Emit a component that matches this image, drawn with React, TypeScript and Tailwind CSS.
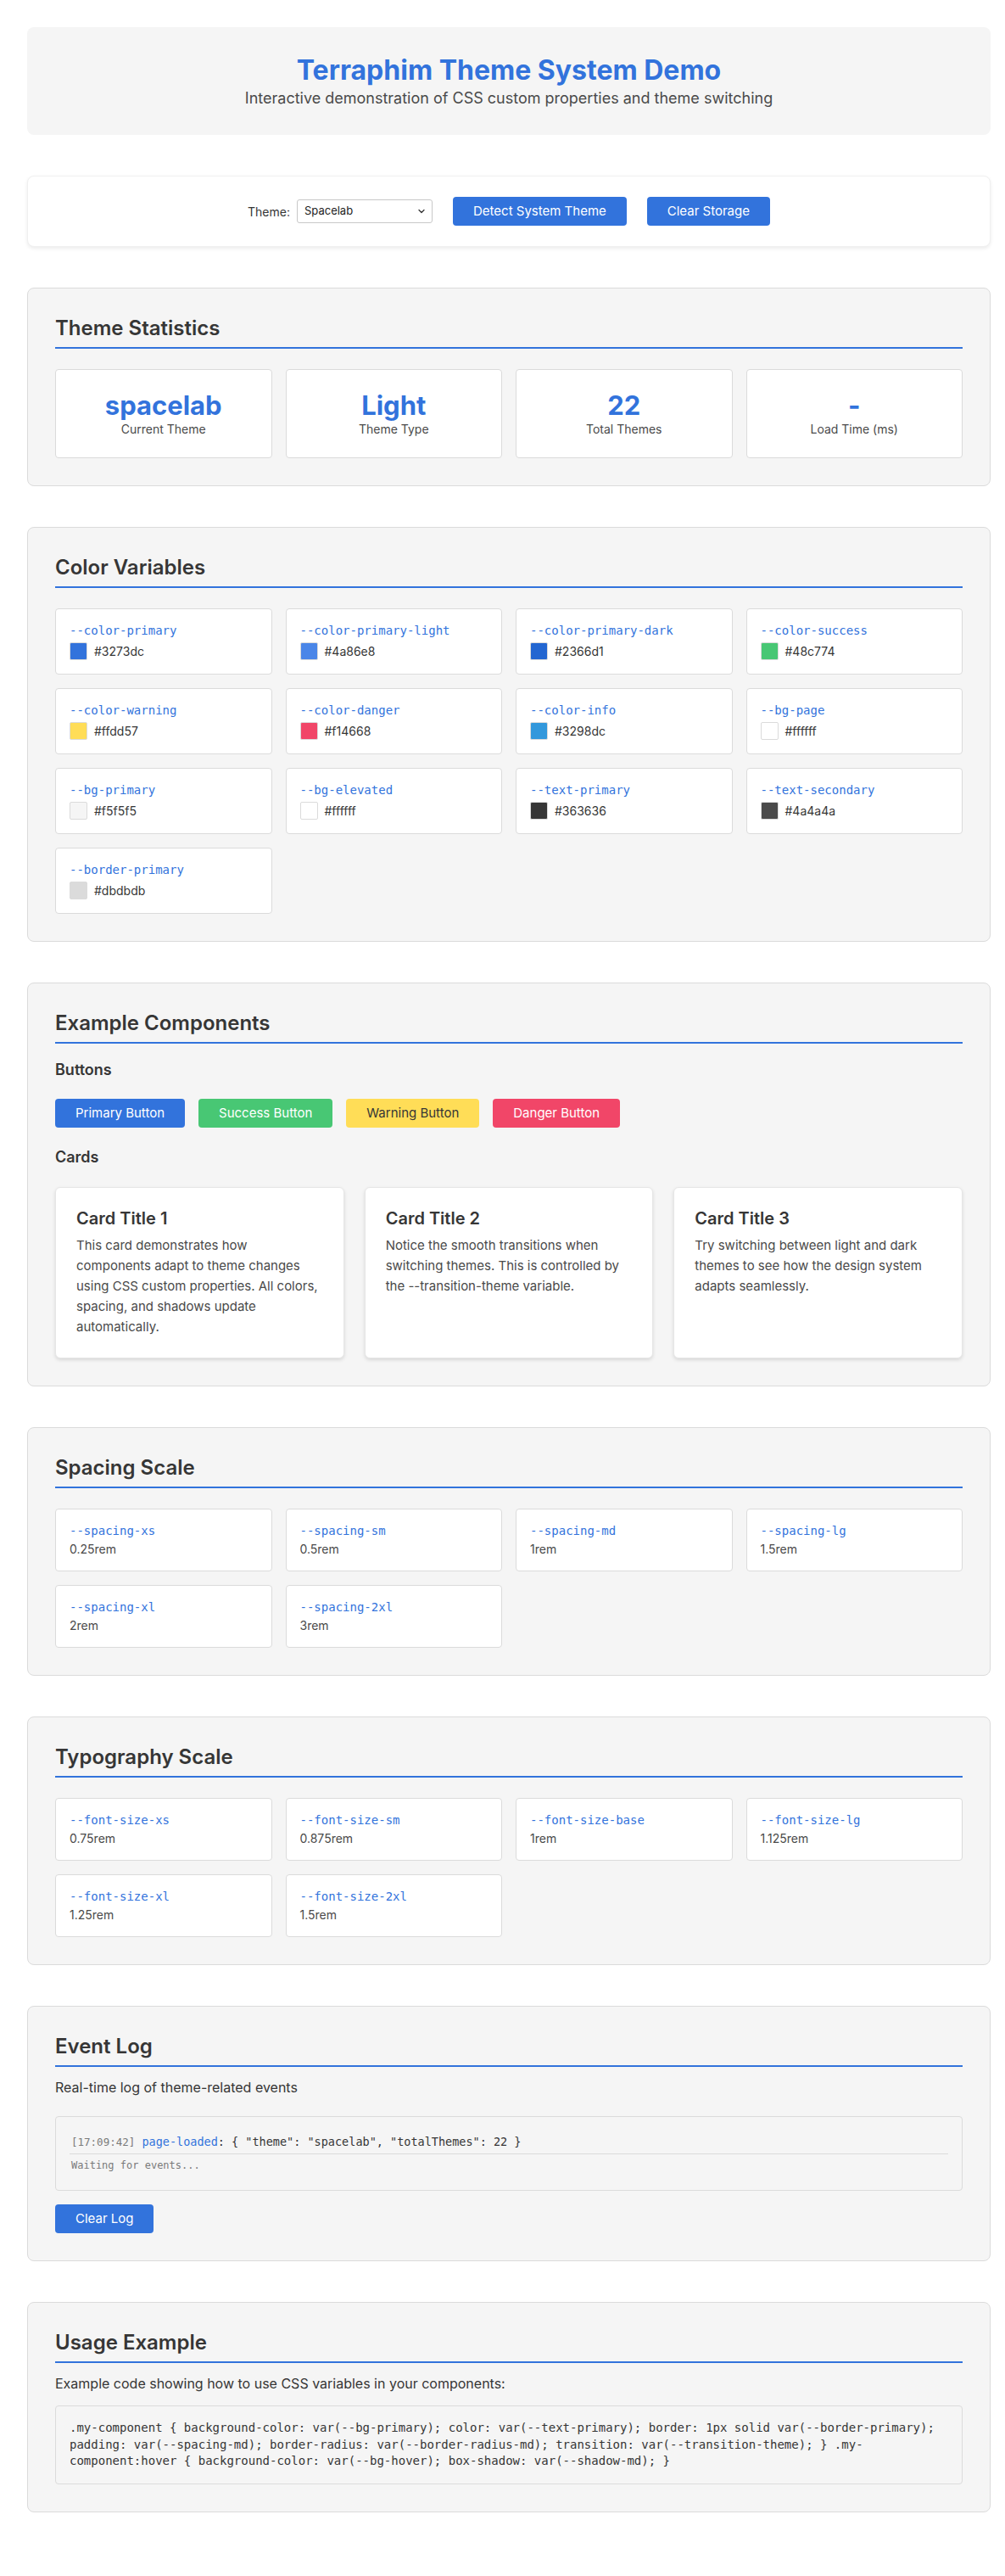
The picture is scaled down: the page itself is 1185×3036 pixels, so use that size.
import { ChevronDown } from 'lucide-react';

const mono = { fontFamily: '"DejaVu Sans Mono", "Liberation Mono", monospace' };

const colorVars = [
  { name: '--color-primary', value: '#3273dc' },
  { name: '--color-primary-light', value: '#4a86e8' },
  { name: '--color-primary-dark', value: '#2366d1' },
  { name: '--color-success', value: '#48c774' },
  { name: '--color-warning', value: '#ffdd57' },
  { name: '--color-danger', value: '#f14668' },
  { name: '--color-info', value: '#3298dc' },
  { name: '--bg-page', value: '#ffffff' },
  { name: '--bg-primary', value: '#f5f5f5' },
  { name: '--bg-elevated', value: '#ffffff' },
  { name: '--text-primary', value: '#363636' },
  { name: '--text-secondary', value: '#4a4a4a' },
  { name: '--border-primary', value: '#dbdbdb' },
];

const spacing = [
  { name: '--spacing-xs', value: '0.25rem' },
  { name: '--spacing-sm', value: '0.5rem' },
  { name: '--spacing-md', value: '1rem' },
  { name: '--spacing-lg', value: '1.5rem' },
  { name: '--spacing-xl', value: '2rem' },
  { name: '--spacing-2xl', value: '3rem' },
];

const typography = [
  { name: '--font-size-xs', value: '0.75rem' },
  { name: '--font-size-sm', value: '0.875rem' },
  { name: '--font-size-base', value: '1rem' },
  { name: '--font-size-lg', value: '1.125rem' },
  { name: '--font-size-xl', value: '1.25rem' },
  { name: '--font-size-2xl', value: '1.5rem' },
];

const stats = [
  { value: 'spacelab', label: 'Current Theme' },
  { value: 'Light', label: 'Theme Type' },
  { value: '22', label: 'Total Themes' },
  { value: '-', label: 'Load Time (ms)' },
];

const cards = [
  {
    title: 'Card Title 1',
    text: 'This card demonstrates how components adapt to theme changes using CSS custom properties. All colors, spacing, and shadows update automatically.',
  },
  {
    title: 'Card Title 2',
    text: 'Notice the smooth transitions when switching themes. This is controlled by the --transition-theme variable.',
  },
  {
    title: 'Card Title 3',
    text: 'Try switching between light and dark themes to see how the design system adapts seamlessly.',
  },
];

const codeSample =
  '.my-component { background-color: var(--bg-primary); color: var(--text-primary); border: 1px solid var(--border-primary); padding: var(--spacing-md); border-radius: var(--border-radius-md); transition: var(--transition-theme); } .my-component:hover { background-color: var(--bg-hover); box-shadow: var(--shadow-md); }';

const Section = ({ title, children }: { title: string; children: React.ReactNode }) => (
  <section className="mb-12 rounded-lg border border-[#dbdbdb] bg-[#f5f5f5] p-8">
    <h2 className="border-b-2 border-[#3273dc] pb-2 text-[24px] font-semibold leading-[29px] text-[#363636]">
      {title}
    </h2>
    {children}
  </section>
);

const VarCard = ({ name, value }: { name: string; value: string }) => (
  <div className="rounded border border-[#dbdbdb] bg-white px-4 py-4">
    <div className="mb-1 text-[14px] leading-[18px] text-[#3273dc]" style={mono}>
      {name}
    </div>
    <div className="text-[14px] leading-[18px] text-[#4a4a4a]">{value}</div>
  </div>
);

export default function App() {
  return (
    <div
      className="min-h-screen bg-white pl-8 pt-8 pb-8 text-[#363636]"
      style={{ fontFamily: 'Inter, "Noto Sans", "Liberation Sans", sans-serif' }}
    >
      <div className="w-[1136px]">
        {/* Header */}
        <header className="mb-12 rounded-lg bg-[#f5f5f5] px-8 py-8 text-center">
          <h1 className="mb-0.5 text-[32px] font-bold leading-[38px] text-[#3273dc]">
            Terraphim Theme System Demo
          </h1>
          <p className="text-[18px] leading-[23px] text-[#4a4a4a]">
            Interactive demonstration of CSS custom properties and theme switching
          </p>
        </header>

        {/* Controls */}
        <div className="mb-12 flex items-center justify-center gap-6 rounded-lg border border-[#f0f0f0] bg-white p-6 shadow-[0_2px_4px_rgba(0,0,0,0.08)]">
          <div className="flex items-center gap-2">
            <span className="text-[14px] text-[#363636]">Theme:</span>
            <div className="relative flex h-[28px] w-[160px] items-center rounded-[3px] border border-[#c8c8c8] bg-white pl-2 text-[13px] text-[#222]">
              Spacelab
              <ChevronDown className="absolute right-1.5 top-1/2 h-3 w-3 -translate-y-1/2 text-[#333]" strokeWidth={2.5} />
            </div>
          </div>
          <button className="h-[34px] rounded bg-[#3273dc] px-6 text-[15px] text-white">Detect System Theme</button>
          <button className="h-[34px] rounded bg-[#3273dc] px-6 text-[15px] text-white">Clear Storage</button>
        </div>

        {/* Stats */}
        <Section title="Theme Statistics">
          <div className="mt-6 grid grid-cols-4 gap-4">
            {stats.map((s) => (
              <div key={s.label} className="rounded border border-[#dbdbdb] bg-white px-6 pt-6 pb-[23px] text-center">
                <div className="text-[31px] font-bold leading-[36px] text-[#3273dc]">{s.value}</div>
                <div className="text-[14px] leading-[20px] text-[#4a4a4a]">{s.label}</div>
              </div>
            ))}
          </div>
        </Section>

        {/* Colors */}
        <Section title="Color Variables">
          <div className="mt-6 grid grid-cols-4 gap-4">
            {colorVars.map((c) => (
              <div key={c.name} className="rounded border border-[#dbdbdb] bg-white px-4 py-4">
                <div className="mb-[5px] text-[14px] leading-[18px] text-[#3273dc]" style={mono}>
                  {c.name}
                </div>
                <div className="flex h-[21px] items-center gap-2">
                  <span
                    className="h-[21px] w-[21px] rounded-[2px] border border-[#dbdbdb]"
                    style={{ backgroundColor: c.value }}
                  />
                  <span className="text-[14px] leading-[18px] text-[#363636]">{c.value}</span>
                </div>
              </div>
            ))}
          </div>
        </Section>

        {/* Components */}
        <Section title="Example Components">
          <h3 className="mt-5 text-[18px] font-semibold leading-[22px] text-[#363636]">Buttons</h3>
          <div className="mt-[23px] flex gap-4">
            <button className="h-[34px] rounded bg-[#3273dc] px-6 text-[15px] text-white">Primary Button</button>
            <button className="h-[34px] rounded bg-[#48c774] px-6 text-[15px] text-white">Success Button</button>
            <button className="h-[34px] rounded bg-[#ffdd57] px-6 text-[15px] text-[#363636]">Warning Button</button>
            <button className="h-[34px] rounded bg-[#f14668] px-6 text-[15px] text-white">Danger Button</button>
          </div>
          <h3 className="mt-6 text-[18px] font-semibold leading-[22px] text-[#363636]">Cards</h3>
          <div className="mt-6 grid grid-cols-3 gap-6">
            {cards.map((c) => (
              <div
                key={c.title}
                className="rounded-md border border-[#e6e6e6] bg-white p-6 shadow-[0_2px_4px_rgba(0,0,0,0.12)]"
              >
                <h4 className="mb-2 text-[20px] font-semibold leading-[24px] text-[#363636]">{c.title}</h4>
                <p className="text-[15px] leading-[24px] text-[#4a4a4a]">{c.text}</p>
              </div>
            ))}
          </div>
        </Section>

        {/* Spacing */}
        <Section title="Spacing Scale">
          <div className="mt-6 grid grid-cols-4 gap-4">
            {spacing.map((s) => (
              <VarCard key={s.name} name={s.name} value={s.value} />
            ))}
          </div>
        </Section>

        {/* Typography */}
        <Section title="Typography Scale">
          <div className="mt-6 grid grid-cols-4 gap-4">
            {typography.map((s) => (
              <VarCard key={s.name} name={s.name} value={s.value} />
            ))}
          </div>
        </Section>

        {/* Event Log */}
        <Section title="Event Log">
          <p className="mt-3 text-[16px] leading-[24px] text-[#363636]">Real-time log of theme-related events</p>
          <div className="mt-[22px] rounded border border-[#dbdbdb] bg-[#f5f5f5] px-4 pt-4 pb-5" style={mono}>
            <div className="border-b border-[#dbdbdb] py-1 pl-0.5 text-[13.5px] leading-[18px] text-[#363636]">
              <span className="text-[12.5px] text-[#7a7a7a]">[17:09:42]</span>{' '}
              <span className="text-[#3273dc]">page-loaded</span>: {'{ "theme": "spacelab", "totalThemes": 22 }'}
            </div>
            <div className="pt-1 pl-0.5 text-[12px] leading-[18px] text-[#7a7a7a]">Waiting for events...</div>
          </div>
          <button className="mt-4 h-[34px] rounded bg-[#3273dc] px-6 text-[15px] text-white">Clear Log</button>
        </Section>

        {/* Usage */}
        <Section title="Usage Example">
          <p className="mt-3 text-[16px] leading-[24px] text-[#363636]">
            Example code showing how to use CSS variables in your components:
          </p>
          <div
            className="mt-[14px] rounded border border-[#dbdbdb] bg-[#f5f5f5] p-4 text-[14px] leading-[19.5px] text-[#363636]"
            style={mono}
          >
            {codeSample}
          </div>
        </Section>
      </div>
    </div>
  );
}
